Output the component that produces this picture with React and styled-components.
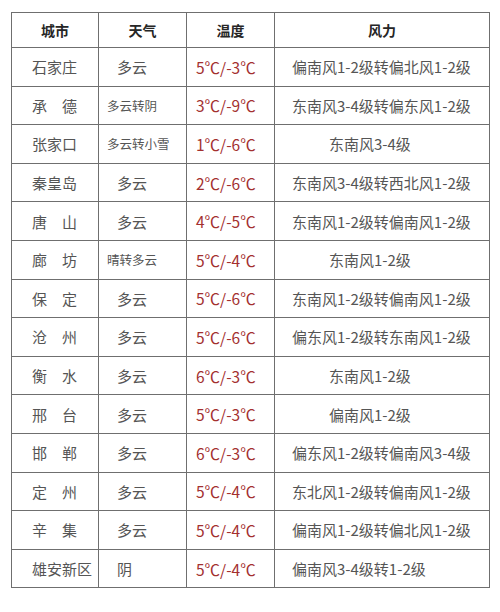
import React from "react";
import styled, { createGlobalStyle } from "styled-components";

const Global = createGlobalStyle`
  html, body { margin: 0; padding: 0; background: #ffffff; }
  body { font-family: "Noto Sans CJK SC", "Noto Sans", sans-serif; }
`;

const Page = styled.div`
  width: 500px;
  height: 612px;
  box-sizing: border-box;
  padding: 12px 11px 0 11px;
  background: #fff;
`;

const Table = styled.table`
  border-collapse: collapse;
  width: 478px;
  table-layout: fixed;
  border: 1px solid #6f6f6f;
`;

const HeadCell = styled.th`
  height: 34px;
  padding: 0;
  border: 1px solid #6f6f6f;
  font-size: 14px;
  font-weight: 700;
  color: #262626;
  text-align: center;
  vertical-align: middle;
`;

const Cell = styled.td`
  height: 37.6px;
  padding: 0 0 0 ${(p) => p.$pad || 0}px;
  border: 1px solid #6f6f6f;
  font-size: ${(p) => p.$size || 15}px;
  color: ${(p) => p.$color || "#555"};
  text-align: left;
  vertical-align: middle;
  white-space: nowrap;
  overflow: hidden;
`;

const rows = [
  ["石家庄", "多云", "5℃/-3℃", "偏南风1-2级转偏北风1-2级"],
  ["承　德", "多云转阴", "3℃/-9℃", "东南风3-4级转偏东风1-2级"],
  ["张家口", "多云转小雪", "1℃/-6℃", "东南风3-4级", true],
  ["秦皇岛", "多云", "2℃/-6℃", "东南风3-4级转西北风1-2级"],
  ["唐　山", "多云", "4℃/-5℃", "东南风1-2级转偏南风1-2级"],
  ["廊　坊", "晴转多云", "5℃/-4℃", "东南风1-2级", true],
  ["保　定", "多云", "5℃/-6℃", "东南风1-2级转偏南风1-2级"],
  ["沧　州", "多云", "5℃/-6℃", "偏东风1-2级转东南风1-2级"],
  ["衡　水", "多云", "6℃/-3℃", "东南风1-2级", true],
  ["邢　台", "多云", "5℃/-3℃", "偏南风1-2级", true],
  ["邯　郸", "多云", "6℃/-3℃", "偏东风1-2级转偏南风3-4级"],
  ["定　州", "多云", "5℃/-4℃", "东北风1-2级转偏南风1-2级"],
  ["辛　集", "多云", "5℃/-4℃", "偏南风1-2级转偏北风1-2级"],
  ["雄安新区", "阴", "5℃/-4℃", "偏南风3-4级转1-2级"],
];

export default function App() {
  return (
    <Page>
      <Global />
      <Table>
        <colgroup>
          <col style={{ width: "87px" }} />
          <col style={{ width: "88px" }} />
          <col style={{ width: "88px" }} />
          <col style={{ width: "215px" }} />
        </colgroup>
        <thead>
          <tr>
            <HeadCell>城市</HeadCell>
            <HeadCell>天气</HeadCell>
            <HeadCell>温度</HeadCell>
            <HeadCell>风力</HeadCell>
          </tr>
        </thead>
        <tbody>
          {rows.map(([city, weather, temp, wind, short]) => {
            const small = weather.length > 2;
            return (
              <tr key={city}>
                <Cell $pad={20}>{city}</Cell>
                <Cell $pad={small ? 8 : 18} $size={small ? 12.5 : 15}>
                  {weather}
                </Cell>
                <Cell $pad={9} $size={15.5} $color="#a3302f">
                  {temp}
                </Cell>
                <Cell $pad={short ? 54 : 17}>{wind}</Cell>
              </tr>
            );
          })}
        </tbody>
      </Table>
    </Page>
  );
}
